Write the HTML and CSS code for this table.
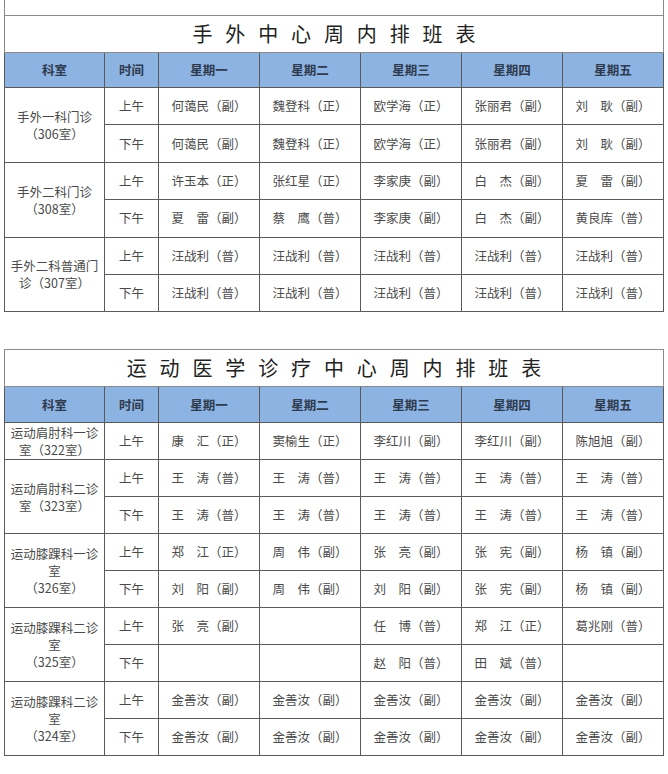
FILE: index.html
```html
<!DOCTYPE html>
<html lang="zh-CN">
<head>
<meta charset="utf-8">
<title>排班表</title>
<link rel="stylesheet" href="styles.css">
</head>
<body>
<div class="page">
  <div class="prev-strip"></div>
  <table class="sched sched-top">
    <colgroup>
      <col class="c-dept"><col class="c-time"><col class="c-day"><col class="c-day"><col class="c-day"><col class="c-day"><col class="c-day">
    </colgroup>
    <tr class="title-row"><td colspan="7" class="title">手 外 中 心 周 内 排 班 表</td></tr>
    <tr class="head-row"><th>科室</th><th>时间</th><th>星期一</th><th>星期二</th><th>星期三</th><th>星期四</th><th>星期五</th></tr>
    <tr class="row-a"><td rowspan="2" class="dept">手外一科门诊<br>（306室）</td><td>上午</td><td>何蔼民（副）</td><td>魏登科（正）</td><td>欧学海（正）</td><td>张丽君（副）</td><td>刘　耿（副）</td></tr>
    <tr class="row-a"><td>下午</td><td>何蔼民（副）</td><td>魏登科（正）</td><td>欧学海（正）</td><td>张丽君（副）</td><td>刘　耿（副）</td></tr>
    <tr class="row-a"><td rowspan="2" class="dept">手外二科门诊<br>（308室）</td><td>上午</td><td>许玉本（正）</td><td>张红星（正）</td><td>李家庚（副）</td><td>白　杰（副）</td><td>夏　雷（副）</td></tr>
    <tr class="row-a"><td>下午</td><td>夏　雷（副）</td><td>蔡　鹰（普）</td><td>李家庚（副）</td><td>白　杰（副）</td><td>黄良库（普）</td></tr>
    <tr class="row-a"><td rowspan="2" class="dept">手外二科普通门<br>诊（307室）</td><td>上午</td><td>汪战利（普）</td><td>汪战利（普）</td><td>汪战利（普）</td><td>汪战利（普）</td><td>汪战利（普）</td></tr>
    <tr class="row-a"><td>下午</td><td>汪战利（普）</td><td>汪战利（普）</td><td>汪战利（普）</td><td>汪战利（普）</td><td>汪战利（普）</td></tr>
  </table>

  <table class="sched sched-bottom">
    <colgroup>
      <col class="c-dept"><col class="c-time"><col class="c-day"><col class="c-day"><col class="c-day"><col class="c-day"><col class="c-day">
    </colgroup>
    <tr class="title-row"><td colspan="7" class="title">运 动 医 学 诊 疗 中 心 周 内 排 班 表</td></tr>
    <tr class="head-row2"><th>科室</th><th>时间</th><th>星期一</th><th>星期二</th><th>星期三</th><th>星期四</th><th>星期五</th></tr>
    <tr class="row-b"><td class="dept">运动肩肘科一诊<br>室（322室）</td><td>上午</td><td>康　汇（正）</td><td>窦榆生（正）</td><td>李红川（副）</td><td>李红川（副）</td><td>陈旭旭（副）</td></tr>
    <tr class="row-b"><td rowspan="2" class="dept">运动肩肘科二诊<br>室（323室）</td><td>上午</td><td>王　涛（普）</td><td>王　涛（普）</td><td>王　涛（普）</td><td>王　涛（普）</td><td>王　涛（普）</td></tr>
    <tr class="row-b"><td>下午</td><td>王　涛（普）</td><td>王　涛（普）</td><td>王　涛（普）</td><td>王　涛（普）</td><td>王　涛（普）</td></tr>
    <tr class="row-b"><td rowspan="2" class="dept">运动膝踝科一诊<br>室<br>（326室）</td><td>上午</td><td>郑　江（正）</td><td>周　伟（副）</td><td>张　亮（副）</td><td>张　宪（副）</td><td>杨　镇（副）</td></tr>
    <tr class="row-b"><td>下午</td><td>刘　阳（副）</td><td>周　伟（副）</td><td>刘　阳（副）</td><td>张　宪（副）</td><td>杨　镇（副）</td></tr>
    <tr class="row-b"><td rowspan="2" class="dept">运动膝踝科二诊<br>室<br>（325室）</td><td>上午</td><td>张　亮（副）</td><td></td><td>任　博（普）</td><td>郑　江（正）</td><td>葛兆刚（普）</td></tr>
    <tr class="row-b"><td>下午</td><td></td><td></td><td>赵　阳（普）</td><td>田　斌（普）</td><td></td></tr>
    <tr class="row-b"><td rowspan="2" class="dept">运动膝踝科二诊<br>室<br>（324室）</td><td>上午</td><td>金善汝（副）</td><td>金善汝（副）</td><td>金善汝（副）</td><td>金善汝（副）</td><td>金善汝（副）</td></tr>
    <tr class="row-b"><td>下午</td><td>金善汝（副）</td><td>金善汝（副）</td><td>金善汝（副）</td><td>金善汝（副）</td><td>金善汝（副）</td></tr>
  </table>
</div>
</body>
</html>
```

FILE: styles.css
```css
html, body {
  margin: 0;
  padding: 0;
  background: #ffffff;
}

body {
  font-family: "Noto Sans CJK SC", "Liberation Serif", serif;
  color: #4a4a4a;
}

.page {
  padding-left: 4px;
  width: 660px;
}

.prev-strip {
  height: 15px;
  border-left: 1px solid #8a8a8a;
  border-right: 1px solid #8a8a8a;
}

.sched {
  width: 660px;
  border-collapse: collapse;
  table-layout: fixed;
  border: 1px solid #8a8a8a;
}

.sched-bottom {
  margin-top: 37px;
}

.c-dept { width: 100px; }
.c-time { width: 54px; }
.c-day { width: 101px; }

.sched td,
.sched th {
  border: 1px solid #5a5a5a;
  padding: 0;
  text-align: center;
  vertical-align: middle;
  font-size: 12.5px;
  font-weight: normal;
  line-height: 18px;
  white-space: nowrap;
}

.sched .title {
  font-size: 20px;
  line-height: 26px;
  color: #222222;
  letter-spacing: 4.2px;
  padding-left: 4px;
  border-color: #8a8a8a;
}

.title-row { height: 37px; }
.head-row { height: 35px; }
.head-row2 { height: 36px; }
.row-a { height: 37.4px; }
.row-b { height: 37px; }

.sched th {
  background: #8db3e2;
  color: #2e3a4e;
  font-weight: bold;
}

.sched .dept {
  line-height: 17px;
  color: #4a4a4a;
}
```
